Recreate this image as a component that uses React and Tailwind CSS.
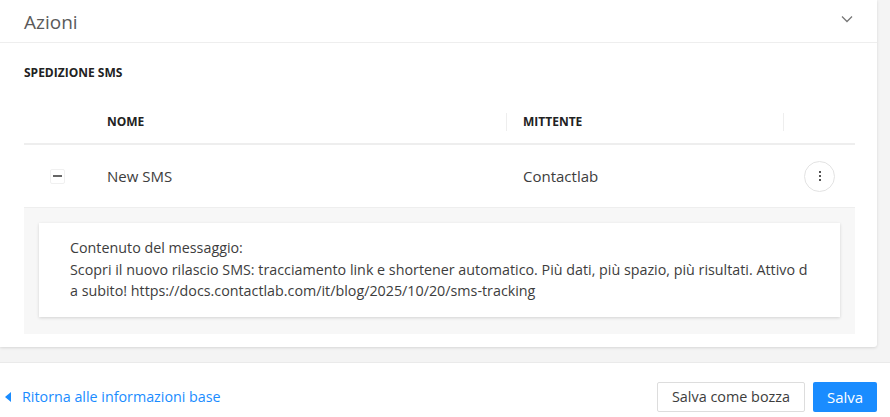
export default function App() {
    const font = { fontFamily: '"Open Sans", "Liberation Sans", sans-serif' };

    return (
        <div className="w-[890px] h-[417px] bg-[#f4f4f4] flex flex-col text-[#3d3d3d]" style={font}>
            <div className="w-[877px] h-[347px] bg-white shadow-[0_1px_3px_rgba(0,0,0,0.12)] rounded-br-[3px] flex flex-col">
                <div className="h-[43px] border-b border-[#eeeeee] flex items-center justify-between pl-6 pr-[24px]">
                    <span className="text-[19px] text-[#5a5a5a] pt-[2px]">Azioni</span>
                    <svg width="12" height="8" viewBox="0 0 12 8" fill="none" className="-mt-[4px]">
                        <path d="M1 1.5 L6 6.5 L11 1.5" stroke="#777777" strokeWidth="1.3" />
                    </svg>
                </div>

                <div className="pl-6 pr-[22px] pt-[23px]">
                    <h3 className="text-[12px] font-bold text-[#222222] leading-[14px]">SPEDIZIONE SMS</h3>

                    <div className="mt-[20px]">
                        <div className="h-[45px] border-b-2 border-[#eeeeee] flex items-center text-[12px] font-bold text-[#222222]">
                            <div className="w-[67px]" />
                            <div className="w-[416px] pl-4 flex items-center justify-between">
                                <span>NOME</span>
                                <span className="w-px h-[18px] bg-[#eeeeee]" />
                            </div>
                            <div className="w-[277px] pl-4 flex items-center justify-between">
                                <span>MITTENTE</span>
                                <span className="w-px h-[18px] bg-[#eeeeee]" />
                            </div>
                            <div className="flex-1" />
                        </div>

                        <div className="h-[62px] flex items-center text-[15px]">
                            <div className="w-[67px] flex justify-center">
                                <div className="w-[15px] h-[15px] border border-[#f0f0f0] rounded-[2px] flex items-center justify-center">
                                    <span className="w-[9px] h-[1.5px] bg-[#666666]" />
                                </div>
                            </div>
                            <div className="w-[416px] pl-4">New SMS</div>
                            <div className="w-[277px] pl-4">Contactlab</div>
                            <div className="flex-1 flex justify-center">
                                <button className="w-[31px] h-[31px] rounded-full border border-[#e3e3e3] flex flex-col items-center justify-center gap-[2px]">
                                    <span className="w-[2px] h-[2px] bg-[#555555]" />
                                    <span className="w-[2px] h-[2px] bg-[#555555]" />
                                    <span className="w-[2px] h-[2px] bg-[#555555]" />
                                </button>
                            </div>
                        </div>

                        <div className="bg-[#f7f7f7] border-t border-[#eeeeee] px-[15px] pt-[15px] pb-[17px]">
                            <div className="bg-white shadow-[0_1px_3px_rgba(0,0,0,0.15)] pl-[31px] pr-[20px] pt-[14px] pb-[15px] text-[14.3px] leading-[21.5px]">
                                <p>Contenuto del messaggio:</p>
                                <p className="whitespace-nowrap">Scopri il nuovo rilascio SMS: tracciamento link e shortener automatico. Più dati, più spazio, più risultati. Attivo d</p>
                                <p>a subito! https://docs.contactlab.com/it/blog/2025/10/20/sms-tracking</p>
                            </div>
                        </div>
                    </div>
                </div>
            </div>

            <div className="mt-[15px] flex-1 bg-white border-t border-[#eaeaea] flex items-start justify-between pt-[19px] pl-[5px] pr-[13px]">
                <a className="h-[30px] flex items-center gap-[11px] text-[14.3px] text-[#1a8cff] cursor-pointer">
                    <svg width="6" height="10" viewBox="0 0 6 10">
                        <path d="M6 0 L0 5 L6 10 Z" fill="#1a8cff" />
                    </svg>
                    <span>Ritorna alle informazioni base</span>
                </a>
                <div className="flex items-center gap-2">
                    <button className="h-[30px] w-[148px] border border-[#dddddd] bg-white text-[14.4px] text-[#3d3d3d] rounded-[2px]">
                        Salva come bozza
                    </button>
                    <button className="h-[30px] w-[64px] bg-[#1a8cff] text-white text-[15px] rounded-[2px]">
                        Salva
                    </button>
                </div>
            </div>
        </div>
    );
}
